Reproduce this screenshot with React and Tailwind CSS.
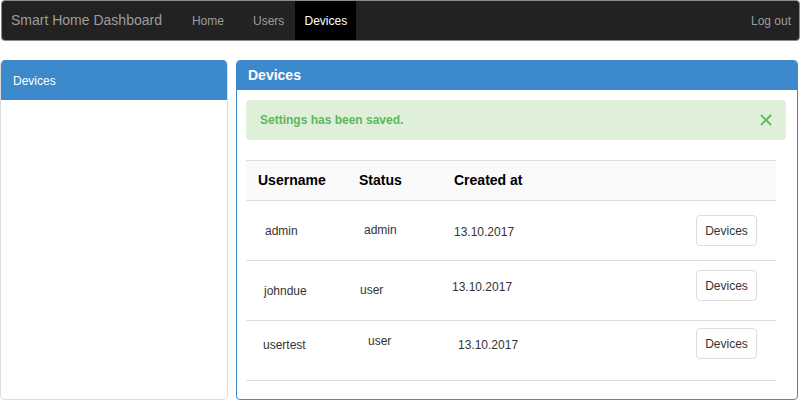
import React from 'react';

const rows = [
    { name: 'admin', status: 'admin', date: '13.10.2017', nameCls: 'pl-[19px]', statusCls: 'pl-[16px] mb-[2px]', dateCls: 'pl-[11px] mt-[2px]', btnCls: '' },
    { name: 'johndue', status: 'user', date: '13.10.2017', nameCls: 'pl-[18px]', statusCls: 'pl-[12px] mb-[1px]', dateCls: 'pl-[9px] mb-[8px]', btnCls: 'mb-[10px]' },
    { name: 'usertest', status: 'user', date: '13.10.2017', nameCls: 'pl-[17px] mb-[12px]', statusCls: 'pl-[20px] mb-[20px]', dateCls: 'pl-[15px] mb-[12px]', btnCls: 'mb-[14px]' },
];

export default function App() {
    return (
        <div className="w-[801px] h-[401px] bg-white overflow-hidden font-['Liberation_Sans',Arial,sans-serif]">
            {/* NAVBAR */}
            <nav className="ml-[1px] w-[799px] h-[41px] flex items-stretch bg-[#222] border border-[#8c8c8c] rounded-[4px] overflow-hidden">
                <span className="ml-[9px] flex items-center text-[14px] text-[#9d9d9d]">Smart Home Dashboard</span>
                <a className="ml-[20px] px-[10px] flex items-center text-[12px] text-[#9d9d9d]">Home</a>
                <a className="ml-[9px] px-[10px] flex items-center text-[12px] text-[#9d9d9d]">Users</a>
                <a className="ml-[1px] w-[61px] flex items-center justify-center bg-black text-[12px] text-white">Devices</a>
                <a className="ml-auto pr-[8px] flex items-center text-[12px] text-[#9d9d9d]">Log out</a>
            </nav>

            <div className="mt-[19px] flex items-start">
                {/* LEFT PANEL */}
                <div className="w-[228px] h-[340px] border-x border-b border-[#ddd] rounded-[5px] overflow-hidden">
                    <div className="h-[40px] bg-[#3c8acb] px-[12px] pt-[1px] flex items-center text-[12px] text-white">Devices</div>
                </div>

                {/* RIGHT PANEL */}
                <div className="ml-[8px] w-[562px] h-[340px] border border-[#3c8acb] rounded-[4px] overflow-hidden">
                    <div className="h-[29px] bg-[#3c8acb] pl-[11px] flex items-center text-[14px] font-bold text-white">Devices</div>
                    <div className="pl-[9px] pt-[10px]">
                        <div className="w-[540px] h-[40px] bg-[#dff0d8] rounded-[4px] pl-[14px] pr-[14px] flex items-center justify-between">
                            <span className="text-[12px] font-bold text-[#5cb85c]">Settings has been saved.</span>
                            <svg width="12" height="12" viewBox="0 0 12 12">
                                <path d="M1 1L11 11M11 1L1 11" stroke="#5cb85c" strokeWidth="1.8" />
                            </svg>
                        </div>

                        {/* TABLE */}
                        <div className="mt-[20px] w-[530px]">
                            <div className="h-[41px] flex items-center bg-[#fafafa] border-y border-[#ddd] text-[14px] font-bold text-black">
                                <div className="w-[102px] pl-[12px]">Username</div>
                                <div className="w-[95px] pl-[11px]">Status</div>
                                <div className="flex-1 pl-[11px]">Created at</div>
                            </div>
                            {rows.map(r => (
                                <div key={r.name} className="h-[60px] flex items-center border-b border-[#ddd] text-[12px] text-[#333]">
                                    <div className={`w-[102px] ${r.nameCls}`}>{r.name}</div>
                                    <div className={`w-[95px] ${r.statusCls}`}>{r.status}</div>
                                    <div className={`flex-1 ${r.dateCls}`}>{r.date}</div>
                                    <button className={`mr-[19px] w-[61px] h-[31px] bg-white border border-[#ddd] rounded-[4px] text-[12px] text-[#333] ${r.btnCls}`}>
                                        Devices
                                    </button>
                                </div>
                            ))}
                        </div>
                    </div>
                </div>
            </div>
        </div>
    );
}
